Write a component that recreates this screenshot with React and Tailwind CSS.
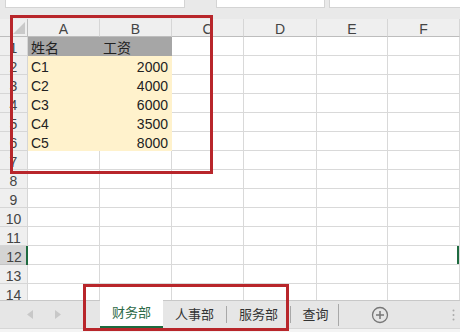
import React from "react";

const FONT = { fontFamily: '"Liberation Sans", "Noto Sans CJK SC", sans-serif' };
const COLS = ["A", "B", "C", "D", "E", "F"];
const DATA = {
  1: ["姓名", "工资"],
  2: ["C1", "2000"],
  3: ["C2", "4000"],
  4: ["C3", "6000"],
  5: ["C4", "3500"],
  6: ["C5", "8000"],
};

function Cell({ r, ci }) {
  const base =
    "relative h-[19px] border-r border-b text-[14px] leading-[16px] pt-[3px] px-[3px] overflow-hidden whitespace-nowrap text-[#222]";
  const d = DATA[r];
  if (d && ci < 2) {
    const fill =
      r === 1
        ? "bg-[#a6a6a6] border-[#a6a6a6]"
        : "bg-[#fff2cc] border-[#fff2cc]";
    const align = r > 1 && ci === 1 ? "text-right" : "text-left";
    return <div className={`${base} ${fill} ${align}`}>{d[ci]}</div>;
  }
  return (
    <div className={`${base} bg-white border-[#d9d9d9]`}>
      {r === 12 && ci === 5 ? (
        <span className="absolute right-0 top-0 h-[19px] w-[2px] bg-[#1e6b40]" />
      ) : null}
    </div>
  );
}

export default function App() {
  const rows = Array.from({ length: 14 }, (_, i) => i + 1);
  return (
    <div className="w-[460px] h-[332px] overflow-hidden bg-[#e9e9e9] relative" style={FONT}>
      {/* top formula bar strip */}
      <div className="h-[19px] flex items-start">
        <div className="ml-[5px] w-[180px] h-[8px] bg-white border-b border-r border-l border-[#d4d4d4]" />
        <div className="ml-[31px] w-[109px] h-[8px] bg-white border-b border-r border-l border-[#d4d4d4]" />
        <div className="ml-[4px] flex-1 h-[8px] bg-white border-b border-l border-[#d4d4d4]" />
      </div>

      {/* sheet grid */}
      <div className="h-[281px] overflow-hidden">
        <div className="grid grid-cols-[28px_72px_72px_72px_73px_71px_72px]">
          {/* header row */}
          <div className="relative h-[18px] bg-[#efefef] border-r border-b border-[#bdbdbd]">
            <svg className="absolute right-[2px] bottom-[2px]" width="12" height="12" viewBox="0 0 12 12">
              <polygon points="12,0 12,12 0,12" fill="#c9c9c9" />
            </svg>
          </div>
          {COLS.map((c) => (
            <div
              key={c}
              className="h-[18px] bg-[#efefef] border-r border-b border-r-[#d6d6d6] border-b-[#bdbdbd] text-center text-[14px] leading-[16px] pt-[2px] text-[#444]"
            >
              {c}
            </div>
          ))}
          {rows.map((r) => (
            <React.Fragment key={r}>
              <div
                className={
                  r === 12
                    ? "relative h-[19px] bg-[#d4d4d4] border-b border-[#c4c4c4] text-center text-[14px] leading-[16px] pt-[3px] text-[#444]"
                    : "h-[19px] bg-[#efefef] border-r border-b border-[#d6d6d6] text-center text-[14px] leading-[16px] pt-[3px] text-[#444]"
                }
              >
                {r}
                {r === 12 ? (
                  <span className="absolute right-0 top-0 h-[19px] w-[2px] bg-[#1e6b40]" />
                ) : null}
              </div>
              {COLS.map((c, ci) => (
                <Cell key={c} r={r} ci={ci} />
              ))}
            </React.Fragment>
          ))}
        </div>
      </div>

      {/* tab bar */}
      <div className="h-[32px] border-t border-[#c8c8c8] bg-[#e6e6e6] flex flex-col">
        <div className="h-[27px] flex items-stretch">
          <div className="w-[100px] flex items-center">
            <svg className="ml-[27px]" width="6" height="9" viewBox="0 0 6 9">
              <polygon points="6,0 6,9 0,4.5" fill="#c8c8c8" />
            </svg>
            <svg className="ml-[22px]" width="6" height="9" viewBox="0 0 6 9">
              <polygon points="0,0 0,9 6,4.5" fill="#c8c8c8" />
            </svg>
          </div>
          <div className="w-[63px] -mt-[1px] bg-white border-b-2 border-[#1e6b40] flex items-center justify-center text-[13px] text-[#2d6a47]">
            财务部
          </div>
          <div className="w-[64px] flex items-center">
            <span className="flex-1 text-center text-[13px] text-[#333]">人事部</span>
            <span className="w-px h-[17px] bg-[#a8a8a8]" />
          </div>
          <div className="w-[64px] flex items-center">
            <span className="flex-1 text-center text-[13px] text-[#333]">服务部</span>
            <span className="w-px h-[17px] bg-[#a8a8a8]" />
          </div>
          <div className="w-[48px] flex items-center">
            <span className="flex-1 text-center text-[13px] text-[#333] pl-[2px]">查询</span>
            <span className="w-px h-[22px] bg-[#a8a8a8]" />
          </div>
          <div className="w-[82px] flex items-center justify-center">
            <svg width="18" height="18" viewBox="0 0 18 18">
              <circle cx="9" cy="9" r="7.5" fill="none" stroke="#777" strokeWidth="1.3" />
              <path d="M9 5v8M5 9h8" stroke="#777" strokeWidth="1.5" />
            </svg>
          </div>
          <div className="flex-1 flex items-center justify-end pr-[5px]">
            <svg width="3" height="12" viewBox="0 0 3 12">
              <circle cx="1.5" cy="1.5" r="1" fill="#aaa" />
              <circle cx="1.5" cy="6" r="1" fill="#aaa" />
              <circle cx="1.5" cy="10.5" r="1" fill="#aaa" />
            </svg>
          </div>
        </div>
        <div className="flex-1 bg-[#f4f4f4] border-t border-[#d6d6d6]" />
      </div>

      {/* red annotation boxes */}
      <div className="absolute left-[10px] top-[15px] w-[203px] h-[159px] border-[3px] border-[#b8262b]" />
      <div className="absolute left-[83px] top-[284px] w-[206px] h-[47px] border-[3px] border-[#b8262b]" />
    </div>
  );
}
